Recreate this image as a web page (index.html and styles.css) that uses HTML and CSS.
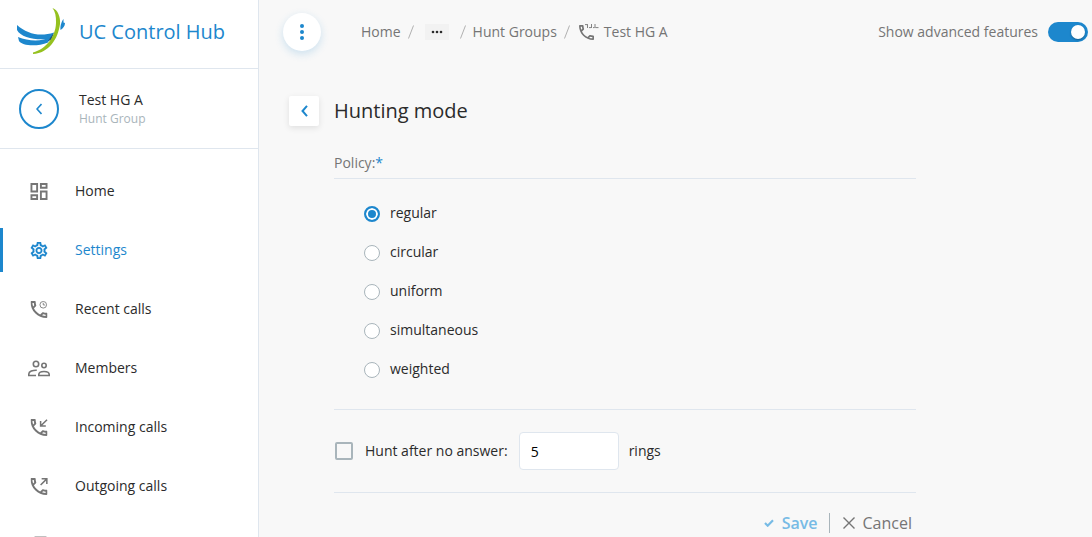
FILE: index.html
```html
<!DOCTYPE html>
<html lang="en">
<head>
    <meta charset="UTF-8">
    <meta name="viewport" content="width=device-width, initial-scale=1.0">
    <title>UC Control Hub</title>
    <link rel="stylesheet" href="styles.css">
</head>
<body>
    <!-- Shared handset shape -->
    <svg class="sprite" aria-hidden="true">
        <symbol id="phone" viewBox="3 3 18 18">
            <path d="M6.54 5c.06.89.21 1.76.45 2.59l-1.2 1.2c-.41-1.2-.67-2.47-.76-3.79h1.51m9.86 12.02c.85.24 1.72.39 2.6.45v1.49c-1.32-.09-2.59-.35-3.8-.75l1.2-1.19M7.5 3H4c-.55 0-1 .45-1 1 0 9.39 7.61 17 17 17 .55 0 1-.45 1-1v-3.49c0-.55-.45-1-1-1-1.24 0-2.45-.2-3.57-.57-.1-.04-.21-.05-.31-.05-.26 0-.51.1-.71.29l-2.2 2.2c-2.83-1.45-5.15-3.76-6.59-6.59l2.2-2.2c.28-.28.36-.67.25-1.02C8.7 6.45 8.5 5.25 8.5 4c0-.55-.45-1-1-1z"/>
        </symbol>
    </svg>

    <div class="app">
        <aside class="sidebar">
            <div class="brand">
                <svg class="brand-logo" viewBox="16 6 50 50" aria-hidden="true">
                    <path class="logo-blue" d="M17 24C27 33 40 36 54 31.5L51 37.500C38 40 21 37 17 29z"/>
                    <path class="logo-blue" d="M18 36C28 40 41 41 51 36L48 41.500C37 46 22 45 19 40z"/>
                    <path class="logo-blue" d="M60.500 29C60 24 62 20 63.500 18L63.500 21.500L65 22C65 25 63 27.500 60.500 29z"/>
                    <path class="logo-dark" d="M48 40L54 31.500L51.500 39z"/>
                    <path class="logo-green" d="M52.500 7C58 9 60.500 16 60 23C58 38 49 52 33 53L33 51.500C46 48 55.500 36 56 22C56.300 15 55 10 52.500 7z"/>
                </svg>
                <span class="brand-name">UC Control Hub</span>
            </div>

            <div class="entity">
                <button type="button" class="entity-back" aria-label="Back">
                    <svg width="6" height="12" viewBox="0 0 6 12"><path class="line" d="M5.500 1L1 6l4.500 5"/></svg>
                </button>
                <div>
                    <div class="entity-name">Test HG A</div>
                    <div class="entity-type">Hunt Group</div>
                </div>
            </div>

            <nav class="menu">
                <a href="#" class="menu-item">
                    <svg class="icon" viewBox="3 3 18 18"><path d="M19 5v2h-4V5h4M9 5v6H5V5h4m10 8v6h-4v-6h4M9 17v2H5v-2h4M21 3h-8v6h8V3zM11 3H3v10h8V3zm10 8h-8v10h8V11zm-10 4H3v6h8v-6z"/></svg>
                    <span>Home</span>
                </a>
                <a href="#" class="menu-item active">
                    <svg class="icon icon-gear" viewBox="2 2 20 20"><path d="M19.430 12.980c.04-.32.07-.64.07-.98 0-.34-.03-.66-.07-.98l2.110-1.650c.19-.15.24-.42.12-.64l-2-3.460c-.09-.16-.26-.25-.44-.25-.06 0-.12.01-.17.03l-2.490 1c-.52-.4-1.080-.73-1.690-.98l-.38-2.650C14.460 2.180 14.250 2 14 2h-4c-.25 0-.46.18-.49.42l-.38 2.650c-.61.25-1.170.59-1.690.98l-2.490-1c-.06-.02-.12-.03-.18-.03-.17 0-.34.09-.43.25l-2 3.460c-.13.22-.07.49.12.64l2.110 1.650c-.04.32-.07.65-.07.98 0 .33.03.66.07.98l-2.110 1.650c-.19.15-.24.42-.12.64l2 3.460c.09.16.26.25.44.25.06 0 .12-.01.17-.03l2.490-1c.52.4 1.080.73 1.690.98l.38 2.650c.03.24.24.42.49.42h4c.25 0 .46-.18.49-.42l.38-2.650c.61-.25 1.170-.59 1.690-.98l2.490 1c.06.02.12.03.18.03.17 0 .34-.09.43-.25l2-3.460c.12-.22.07-.49-.12-.64l-2.110-1.650zm-1.980-1.710c.04.31.05.52.05.73 0 .21-.02.43-.05.73l-.14 1.130.89.7 1.080.84-.7 1.210-1.270-.51-1.040-.42-.9.68c-.43.32-.84.56-1.250.73l-1.060.43-.16 1.130-.2 1.350h-1.400l-.19-1.350-.16-1.130-1.060-.43c-.43-.18-.83-.41-1.230-.71l-.91-.7-1.060.43-1.270.51-.7-1.210 1.080-.84.89-.7-.14-1.130c-.03-.31-.05-.54-.05-.74s.02-.43.05-.73l.14-1.130-.89-.7-1.080-.84.7-1.210 1.270.51 1.040.42.9-.68c.43-.32.84-.56 1.250-.73l1.060-.43.16-1.130.2-1.350h1.390l.19 1.350.16 1.130 1.060.43c.43.18.83.41 1.230.71l.91.7 1.060-.43 1.270-.51.7 1.210-1.070.85-.89.7.14 1.130zM12 8c-2.210 0-4 1.790-4 4s1.790 4 4 4 4-1.790 4-4-1.790-4-4-4zm0 6c-1.100 0-2-.9-2-2s.9-2 2-2 2 .9 2 2-.9 2-2 2z"/></svg>
                    <span>Settings</span>
                </a>
                <a href="#" class="menu-item">
                    <svg class="icon" viewBox="0 0 18 18">
                        <use href="#phone" width="18" height="18"/>
                        <circle class="thin" cx="13.500" cy="4" r="3.500"/>
                        <path class="thin" d="M13.500 2v2.200h2"/>
                    </svg>
                    <span>Recent calls</span>
                </a>
                <a href="#" class="menu-item">
                    <svg class="icon" viewBox="0 0 22 17">
                        <circle class="line" cx="8" cy="4" r="2.700"/>
                        <circle class="line" cx="16" cy="5.500" r="2.200"/>
                        <path class="line" d="M8 15.500H.8v-1.500c0-2.500 4-4 8-3.800M10.800 15.500v-1c0-4 10.400-4 10.400 0v1z"/>
                    </svg>
                    <span>Members</span>
                </a>
                <a href="#" class="menu-item">
                    <svg class="icon" viewBox="0 0 18 18">
                        <use href="#phone" width="18" height="18"/>
                        <path class="line" d="M17.500 .7L11 7.200M10.700 2v5.500h5.500"/>
                    </svg>
                    <span>Incoming calls</span>
                </a>
                <a href="#" class="menu-item">
                    <svg class="icon" viewBox="0 0 18 18">
                        <use href="#phone" width="18" height="18"/>
                        <path class="line" d="M10.700 7.500L17 1.200M11.800 .9h5.500v5.500"/>
                    </svg>
                    <span>Outgoing calls</span>
                </a>
                <a href="#" class="menu-item" aria-label="More">
                    <svg class="icon icon-tall" viewBox="0 0 22 19"><rect class="thin" x="7" y="1" width="11" height="17"/></svg>
                </a>
            </nav>
        </aside>

        <main class="content">
            <header class="topbar">
                <button type="button" class="more-btn" aria-label="Menu">
                    <svg width="4" height="16" viewBox="0 0 4 16"><circle cx="2" cy="2" r="2"/><circle cx="2" cy="8" r="2"/><circle cx="2" cy="14" r="2"/></svg>
                </button>
                <nav class="breadcrumbs">
                    <a href="#">Home</a>
                    <svg class="slash" viewBox="0 0 6 14"><path d="M5.500 .5L.5 13.500"/></svg>
                    <button type="button" class="crumb-more" aria-label="Show path">
                        <svg width="12" height="4" viewBox="0 0 12 4"><circle cx="2" cy="2" r="1.300"/><circle cx="6" cy="2" r="1.300"/><circle cx="10" cy="2" r="1.300"/></svg>
                    </button>
                    <svg class="slash" viewBox="0 0 6 14"><path d="M5.500 .5L.5 13.500"/></svg>
                    <a href="#">Hunt Groups</a>
                    <svg class="slash" viewBox="0 0 6 14"><path d="M5.500 .5L.5 13.500"/></svg>
                    <a href="#" class="crumb-current">
                        <svg width="20" height="16" viewBox="0 0 20 16">
                            <use href="#phone" y="1" width="15" height="15"/>
                            <path class="thin" d="M6 .6h3M8.500 1v3M10 3.600h2M12.500 0v4M14 3.600h1.500M16 0v4M16.500 3.600h3"/>
                        </svg>
                        Test HG A
                    </a>
                </nav>
                <label class="advanced">
                    Show advanced features
                    <input type="checkbox" class="switch" checked>
                </label>
            </header>

            <form class="panel">
                <div class="panel-head">
                    <button type="button" class="back-btn" aria-label="Back">
                        <svg width="7" height="12" viewBox="0 0 7 12"><path d="M6 .8L1.500 6L6 11.200"/></svg>
                    </button>
                    <h1>Hunting mode</h1>
                </div>

                <div class="panel-body">
                    <fieldset class="policy">
                        <legend>Policy:<span class="required">*</span></legend>
                        <div class="options">
                            <label><input type="radio" name="policy" class="radio" checked>regular</label>
                            <label><input type="radio" name="policy" class="radio">circular</label>
                            <label><input type="radio" name="policy" class="radio">uniform</label>
                            <label><input type="radio" name="policy" class="radio">simultaneous</label>
                            <label><input type="radio" name="policy" class="radio">weighted</label>
                        </div>
                    </fieldset>

                    <div class="hunt-row">
                        <input type="checkbox" id="hunt" class="checkbox">
                        <label for="hunt">Hunt after no answer:</label>
                        <input type="text" id="rings" class="rings" value="5">
                        <label for="rings">rings</label>
                    </div>

                    <div class="actions">
                        <button type="submit" class="save">
                            <svg width="10" height="8" viewBox="0 0 10 8"><path d="M1 4l2.700 2.700L9 1.300"/></svg>
                            Save
                        </button>
                        <button type="button" class="cancel">
                            <svg width="12" height="12" viewBox="0 0 12 12"><path d="M.5 .5l11 11M11.500 .5l-11 11"/></svg>
                            Cancel
                        </button>
                    </div>
                </div>
            </form>
        </main>
    </div>
</body>
</html>
```
FILE: styles.css
```css
* {
    box-sizing: border-box;
}

body {
    margin: 0;
    font-family: "Open Sans", "Noto Sans", sans-serif;
    font-size: 14px;
    line-height: 20px;
    color: #2b2b2b;
    background: #f8f8f8;
}

a {
    color: inherit;
    text-decoration: none;
}

button {
    padding: 0;
    border: none;
    background: none;
    font: inherit;
    color: inherit;
    cursor: pointer;
}

input {
    margin: 0;
}

svg {
    flex: none;
    fill: currentColor;
}

.sprite {
    display: none;
}

.line,
.thin {
    fill: none;
    stroke: currentColor;
    stroke-width: 1.6;
}

.thin {
    stroke-width: 0.9;
}

.app {
    display: flex;
    height: 100vh;
    overflow: hidden;
}

/* Sidebar */
.sidebar {
    flex: 0 0 259px;
    background: #fff;
    border-right: 1px solid #dfe6ee;
    overflow: hidden;
}

.brand {
    display: flex;
    align-items: center;
    gap: 13px;
    height: 69px;
    padding: 0 16px 4px;
    border-bottom: 1px solid #dfe6ee;
}

.brand-logo {
    width: 50px;
    height: 50px;
}

.logo-blue {
    fill: #1d87cd;
}

.logo-dark {
    fill: #1c4f78;
}

.logo-green {
    fill: #95c11f;
}

.brand-name {
    font-size: 20px;
    line-height: 28px;
    color: #1d87cd;
}

.entity {
    display: flex;
    align-items: center;
    gap: 20px;
    height: 80px;
    padding: 0 19px;
    border-bottom: 1px solid #dfe6ee;
}

.entity-back {
    display: flex;
    align-items: center;
    justify-content: center;
    width: 40px;
    height: 40px;
    border: 2px solid #1d87cd;
    border-radius: 50%;
    color: #1d87cd;
}

.entity-type {
    font-size: 12px;
    line-height: 18px;
    color: #a9b5bb;
}

.menu {
    display: flex;
    flex-direction: column;
    gap: 15px;
    padding-top: 20px;
}

.menu-item {
    display: flex;
    flex: none;
    align-items: center;
    height: 44px;
    padding-left: 28px;
}

.menu-item span {
    padding-left: 25px;
}

.menu-item.active {
    color: #1d87cd;
    box-shadow: inset 3px 0 #1d87cd;
}

.icon {
    width: 22px;
    height: 17px;
    color: #757575;
}

.icon-tall {
    height: 19px;
}

.icon-gear {
    stroke: currentColor;
    stroke-width: 0.2;
}

.active .icon {
    color: inherit;
}

/* Top bar */
.content {
    flex: 1;
    min-width: 0;
}

.topbar {
    display: flex;
    align-items: center;
    height: 64px;
    padding: 0 4px 0 24px;
    color: #757575;
}

.more-btn {
    display: flex;
    align-items: center;
    justify-content: center;
    width: 38px;
    height: 38px;
    border-radius: 50%;
    background: #fff;
    box-shadow: 0 3px 8px rgba(29, 135, 205, 0.2);
    color: #1d87cd;
}

.breadcrumbs {
    display: flex;
    align-items: center;
    gap: 7px;
    padding-left: 40px;
}

.slash {
    width: 6px;
    height: 14px;
    fill: none;
    stroke: #b0b0b0;
}

.crumb-more {
    display: flex;
    align-items: center;
    justify-content: center;
    width: 24px;
    height: 16px;
    margin: 0 4px;
    background: #f2f2f2;
    color: #2b2b2b;
}

.crumb-current {
    display: flex;
    align-items: center;
    gap: 5px;
    padding-left: 2px;
}

.advanced {
    display: flex;
    align-items: center;
    gap: 10px;
    margin-left: auto;
}

.switch {
    appearance: none;
    display: flex;
    align-items: center;
    width: 40px;
    height: 20px;
    padding: 0 3px;
    border-radius: 10px;
    background: #b0b0b0;
    cursor: pointer;
}

.switch::before {
    content: "";
    width: 14px;
    height: 14px;
    border-radius: 50%;
    background: #fff;
    box-shadow: 0 1px 2px rgba(0, 0, 0, 0.3);
}

.switch:checked {
    justify-content: flex-end;
    background: #1d87cd;
}

/* Form */
.panel {
    padding: 32px 0 0 30px;
}

.panel-head {
    display: flex;
    align-items: center;
    gap: 15px;
}

.panel-head h1 {
    margin: 0;
    font-size: 20px;
    font-weight: 400;
    line-height: 28px;
}

.back-btn {
    display: flex;
    align-items: center;
    justify-content: center;
    width: 30px;
    height: 30px;
    border-radius: 2px;
    background: #fff;
    box-shadow: 0 2px 6px rgba(0, 0, 0, 0.1);
}

.back-btn path {
    fill: none;
    stroke: #1d87cd;
    stroke-width: 2;
}

.panel-body {
    width: 78%;
    max-width: 582px;
    margin: 27px 0 0 45px;
}

.policy {
    min-width: 0;
    margin: 0;
    padding: 0;
    border: none;
    border-bottom: 1px solid #dfe6ee;
}

.policy legend {
    width: 100%;
    padding: 0 0 5px;
    border-bottom: 1px solid #dfe6ee;
    color: #757575;
}

.required {
    color: #1d87cd;
}

.options {
    display: flex;
    flex-direction: column;
    align-items: flex-start;
    gap: 19px;
    padding: 24px 30px 30px;
}

.options label {
    display: flex;
    align-items: center;
    gap: 10px;
}

.radio {
    appearance: none;
    width: 16px;
    height: 16px;
    margin-top: 2px;
    border: 1px solid #a9b5bb;
    border-radius: 50%;
    background: #fff;
}

.radio:checked {
    border: 2px solid #1d87cd;
    background: #1d87cd;
    box-shadow: inset 0 0 0 2px #fff;
}

.hunt-row {
    display: flex;
    align-items: center;
    height: 83px;
    border-bottom: 1px solid #dfe6ee;
}

.checkbox {
    appearance: none;
    width: 18px;
    height: 18px;
    margin: 0 12px 0 1px;
    border: 2px solid #a9b5bb;
    border-radius: 2px;
}

.checkbox:checked {
    background: #1d87cd;
}

.rings {
    width: 100px;
    height: 38px;
    margin: 0 10px 0 11px;
    padding: 0 11px;
    border: 1px solid #dfe6ee;
    border-radius: 4px;
    background: #fff;
    font: inherit;
    color: #000;
}

.actions {
    display: flex;
    justify-content: flex-end;
    padding: 20px 4px 20px 0;
    font-size: 16px;
}

.actions button {
    display: flex;
    align-items: center;
    gap: 8px;
}

.actions path {
    fill: none;
    stroke: currentColor;
    stroke-width: 1.4;
}

.actions .save {
    padding-right: 11px;
    border-right: 1px solid #a9b5bb;
    font-weight: 600;
    color: #77bbe5;
}

.actions .save path {
    stroke-width: 2.2;
}

.actions .cancel {
    padding-left: 13px;
    color: #757575;
}
```
